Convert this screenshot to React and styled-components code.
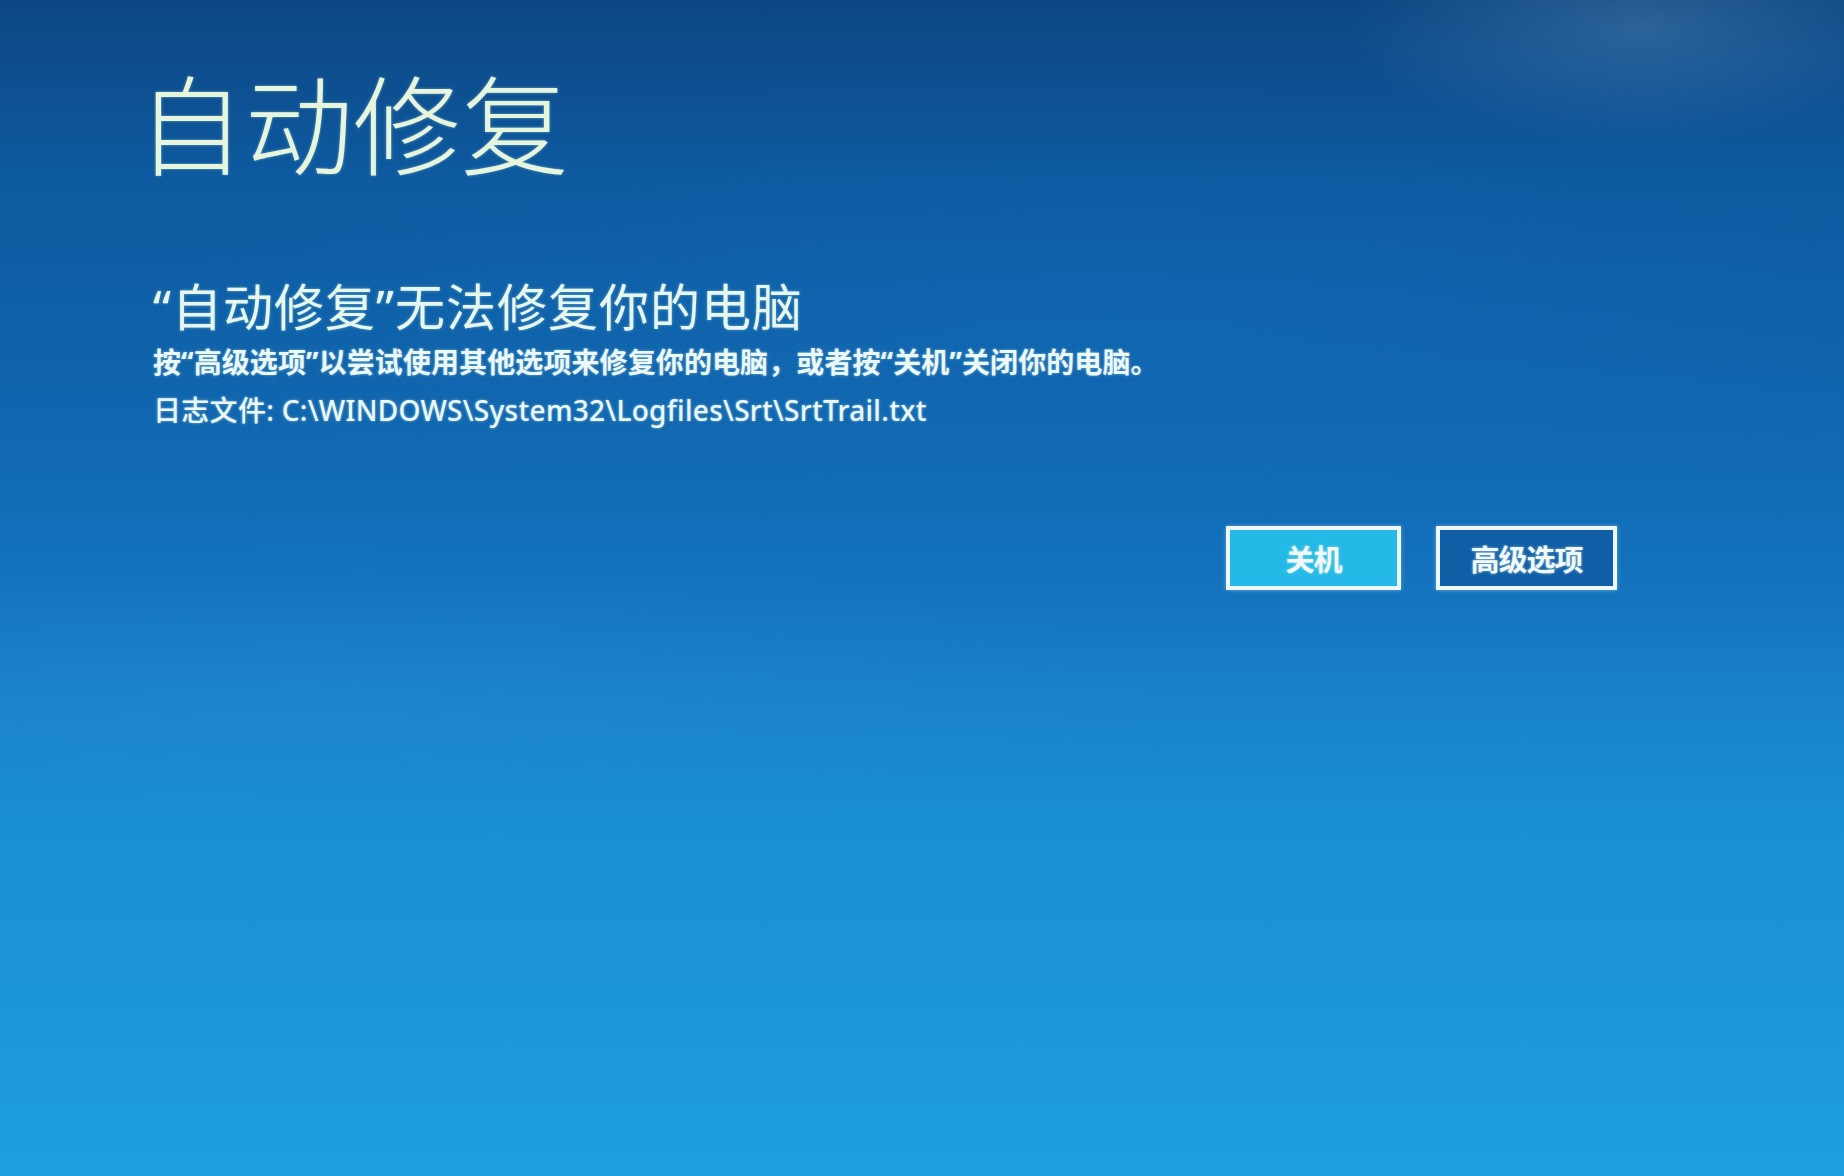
import React from 'react';
import styled, { createGlobalStyle } from 'styled-components';

const GlobalStyle = createGlobalStyle`
  html, body {
    margin: 0;
    padding: 0;
    height: 100%;
    overflow: hidden;
  }
  body {
    font-family: "Noto Sans", "Noto Sans CJK SC", sans-serif;
  }
`;

const Screen = styled.div`
  width: 100vw;
  height: 100vh;
  box-sizing: border-box;
  padding: 62px 0 0 137px;
  display: flex;
  flex-direction: column;
  overflow: hidden;
  background:
    radial-gradient(ellipse 420px 160px at 1640px 30px, rgba(120, 160, 200, 0.28), transparent 70%),
    radial-gradient(ellipse 1400px 260px at 1100px 330px, rgba(20, 110, 190, 0.35), transparent 70%),
    radial-gradient(ellipse 1300px 220px at 300px 700px, rgba(40, 140, 215, 0.25), transparent 70%),
    linear-gradient(
      180deg,
      #0d4783 0%,
      #0d5396 10%,
      #0d5aa0 15%,
      #0f63aa 30%,
      #1371bb 48%,
      #1882ca 60%,
      #1a8fd4 70%,
      #1b95d9 85%,
      #1e9fe2 100%
    );
`;

const Title = styled.h1`
  margin: 0;
  font-size: 108px;
  line-height: 128px;
  font-weight: 300;
  color: #e6f6de;
  text-shadow: 0 0 3px rgba(220, 250, 220, 0.45);
`;

const Message = styled.div`
  margin-top: 87px;
  padding-left: 16px;
  display: flex;
  flex-direction: column;
`;

const Heading = styled.h2`
  margin: 0;
  font-size: 50px;
  line-height: 60px;
  font-weight: 400;
  color: #e6f7ee;
  letter-spacing: 1px;
  text-shadow: 0 0 3px rgba(220, 250, 240, 0.45);
`;

const Line = styled.p`
  margin: ${({ $gap }) => $gap}px 0 0;
  font-size: 28px;
  line-height: 40px;
  font-weight: ${({ $bold }) => ($bold ? 700 : 500)};
  color: #eaf8f6;
  letter-spacing: ${({ $bold }) => ($bold ? '0.1px' : '0.3px')};
  text-shadow: 0 0 3px rgba(220, 250, 250, 0.5);
`;

const ButtonRow = styled.div`
  margin-top: 96px;
  padding-right: 227px;
  display: flex;
  justify-content: flex-end;
  gap: 35px;
`;

const Button = styled.button`
  width: ${({ $wide }) => ($wide ? 181 : 175)}px;
  height: 64px;
  box-sizing: border-box;
  border: 4px solid #eef8fa;
  background: ${({ $primary }) => ($primary ? '#24b9e7' : '#0f5ea6')};
  color: #f0f9f6;
  font-family: "Noto Sans", "Noto Sans CJK SC", sans-serif;
  font-size: 29px;
  font-weight: 700;
  letter-spacing: -1px;
  display: flex;
  align-items: center;
  justify-content: center;
  cursor: pointer;
  box-shadow: 0 0 4px rgba(230, 250, 255, 0.4);
  text-shadow: 0 0 3px rgba(230, 250, 250, 0.6);
`;

export default function App() {
  return (
    <>
      <GlobalStyle />
      <Screen>
        <Title>自动修复</Title>
        <Message>
          <Heading>“自动修复”无法修复你的电脑</Heading>
          <Line $bold $gap={5}>
            按“高级选项”以尝试使用其他选项来修复你的电脑，或者按“关机”关闭你的电脑。
          </Line>
          <Line $gap={8}>日志文件: C:\WINDOWS\System32\Logfiles\Srt\SrtTrail.txt</Line>
        </Message>
        <ButtonRow>
          <Button $primary>关机</Button>
          <Button $wide>高级选项</Button>
        </ButtonRow>
      </Screen>
    </>
  );
}
